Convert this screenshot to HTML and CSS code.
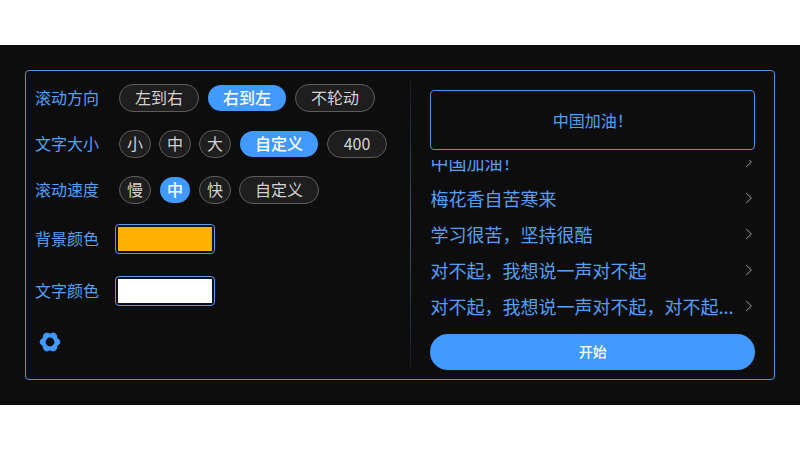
FILE: index.html
```html
<!DOCTYPE html>
<html lang="zh-CN">
<head>
<meta charset="utf-8">
<meta name="viewport" content="width=device-width, initial-scale=1">
<title>滚动字幕</title>
<link rel="stylesheet" href="styles.css">
</head>
<body>
<main class="screen">
  <div class="panel">
    <section class="settings">
      <div class="row" role="group" aria-labelledby="direction">
        <span class="label" id="direction">滚动方向</span>
        <div class="options">
          <button type="button" class="pill wide">左到右</button>
          <button type="button" class="pill wide active" aria-pressed="true">右到左</button>
          <button type="button" class="pill wide">不轮动</button>
        </div>
      </div>
      <div class="row" role="group" aria-labelledby="size">
        <span class="label" id="size">文字大小</span>
        <div class="options">
          <button type="button" class="pill">小</button>
          <button type="button" class="pill">中</button>
          <button type="button" class="pill">大</button>
          <button type="button" class="pill wide active" aria-pressed="true">自定义</button>
          <input class="pill value" type="text" inputmode="numeric" value="400" aria-labelledby="size">
        </div>
      </div>
      <div class="row" role="group" aria-labelledby="speed">
        <span class="label" id="speed">滚动速度</span>
        <div class="options">
          <button type="button" class="pill">慢</button>
          <button type="button" class="pill active" aria-pressed="true">中</button>
          <button type="button" class="pill">快</button>
          <button type="button" class="pill wide">自定义</button>
        </div>
      </div>
      <div class="row color-row">
        <label class="label" for="background">背景颜色</label>
        <input class="color" type="color" id="background" value="#ffb000">
      </div>
      <div class="row color-row">
        <label class="label" for="foreground">文字颜色</label>
        <input class="color" type="color" id="foreground" value="#ffffff">
      </div>
      <button type="button" class="gear" aria-label="设置">
        <svg viewBox="0 0 24 24" width="24" height="24" aria-hidden="true">
          <path class="gear-body" d="M21.3 10Q22.4 12 21.3 14L18.8 15.9L18.4 19.1Q17.2 21 14.9 21L12 19.8L9.1 21Q6.8 21 5.6 19.1L5.2 15.9L2.7 14Q1.6 12 2.7 10L5.2 8.1L5.6 4.9Q6.8 3 9.1 3L12 4.2L14.9 3Q17.2 3 18.4 4.9L18.8 8.1Z"/>
          <circle class="gear-hole" cx="12" cy="12" r="4.4"/>
        </svg>
      </button>
    </section>
    <section class="content">
      <div class="preview">中国加油！</div>
      <ul class="history">
        <li><a href="#"><span class="phrase">中国加油！</span><svg class="chevron" viewBox="0 0 8 12" aria-hidden="true"><path d="M1 1L6.5 6L1 11"/></svg></a></li>
        <li><a href="#"><span class="phrase">梅花香自苦寒来</span><svg class="chevron" viewBox="0 0 8 12" aria-hidden="true"><path d="M1 1L6.5 6L1 11"/></svg></a></li>
        <li><a href="#"><span class="phrase">学习很苦，坚持很酷</span><svg class="chevron" viewBox="0 0 8 12" aria-hidden="true"><path d="M1 1L6.5 6L1 11"/></svg></a></li>
        <li><a href="#"><span class="phrase">对不起，我想说一声对不起</span><svg class="chevron" viewBox="0 0 8 12" aria-hidden="true"><path d="M1 1L6.5 6L1 11"/></svg></a></li>
        <li><a href="#"><span class="phrase">对不起，我想说一声对不起，对不起...</span><svg class="chevron" viewBox="0 0 8 12" aria-hidden="true"><path d="M1 1L6.5 6L1 11"/></svg></a></li>
      </ul>
      <button type="button" class="start">开始</button>
    </section>
  </div>
</main>
</body>
</html>
```
FILE: styles.css
```css
* {
  box-sizing: border-box;
}

body {
  margin: 0;
  min-height: 100vh;
  display: flex;
  flex-direction: column;
  justify-content: center;
  background: #fff;
  color: #55a0f5;
  font-family: "Noto Sans CJK SC", sans-serif;
  font-size: 16px;
  line-height: 24px;
}

button,
input {
  margin: 0;
  padding: 0;
  font: inherit;
}

.screen {
  padding: 25px;
  background: #0d0d0d;
}

.panel {
  display: grid;
  grid-template-columns: 385fr 364fr;
  border: 1px solid #4f93e6;
  border-radius: 4px;
}

.settings {
  display: flex;
  flex-direction: column;
  align-items: flex-start;
  padding: 13px 0 24px 9px;
}

.row {
  display: flex;
  align-items: center;
  margin-bottom: 18px;
}

.label {
  width: 84px;
  padding-bottom: 2px;
  white-space: nowrap;
}

.options {
  display: flex;
  gap: 8px;
}

.pill {
  width: 32px;
  height: 28px;
  padding-bottom: 2px;
  border: 1px solid #5c5c5c;
  border-radius: 14px;
  background: #1e1e1e;
  color: #d2d2d2;
  line-height: 24px;
  text-align: center;
}

.wide {
  width: 80px;
}

.value {
  width: 60px;
}

.active {
  border-color: transparent;
  background: #409aff;
  background-clip: padding-box;
  color: #fff;
  font-weight: 500;
}

.color-row {
  margin: 2px 0 20px;
}

.color-row .label {
  width: 80px;
}

.color {
  appearance: none;
  width: 100px;
  height: 30px;
  padding: 2px;
  border: 1px solid #5c98e8;
  border-radius: 4px;
  background: #060e20;
}

.color::-webkit-color-swatch-wrapper {
  padding: 0;
}

.color::-webkit-color-swatch {
  border: 0;
}

.gear {
  display: flex;
  margin: 4px 0 0 3px;
  border: 0;
  background: none;
}

.gear-body {
  fill: #409aff;
  stroke: #409aff;
  stroke-width: 1;
  stroke-linejoin: round;
}

.gear-hole {
  fill: #0d0d0d;
}

.content {
  display: flex;
  flex-direction: column;
  min-width: 0;
  margin: 9px 0;
  padding: 10px 19px 0;
  border-left: 1px solid;
  border-image: linear-gradient(#151a22, #3a5680 50%, #151a22) 1;
}

.preview {
  display: grid;
  place-items: center;
  height: 60px;
  border: 1px solid #4f93e6;
  border-radius: 4px;
}

.history {
  display: flex;
  flex-direction: column;
  justify-content: flex-end;
  height: 165px;
  margin: 10px 0 9px;
  padding: 0;
  overflow: hidden;
  list-style: none;
  font-size: 18px;
}

.history li {
  flex: none;
}

.history a {
  display: flex;
  align-items: center;
  height: 36px;
  padding: 0 2px 2px 0;
  color: inherit;
  text-decoration: none;
}

.phrase {
  flex: 1;
  min-width: 0;
  overflow: hidden;
  white-space: nowrap;
}

.chevron {
  width: 8px;
  height: 12px;
  fill: none;
  stroke: #9a9a9a;
}

.start {
  height: 36px;
  padding-bottom: 2px;
  border: 0;
  border-radius: 18px;
  background: #409aff;
  color: #fff;
  font-size: 14px;
  font-weight: 500;
}
```
